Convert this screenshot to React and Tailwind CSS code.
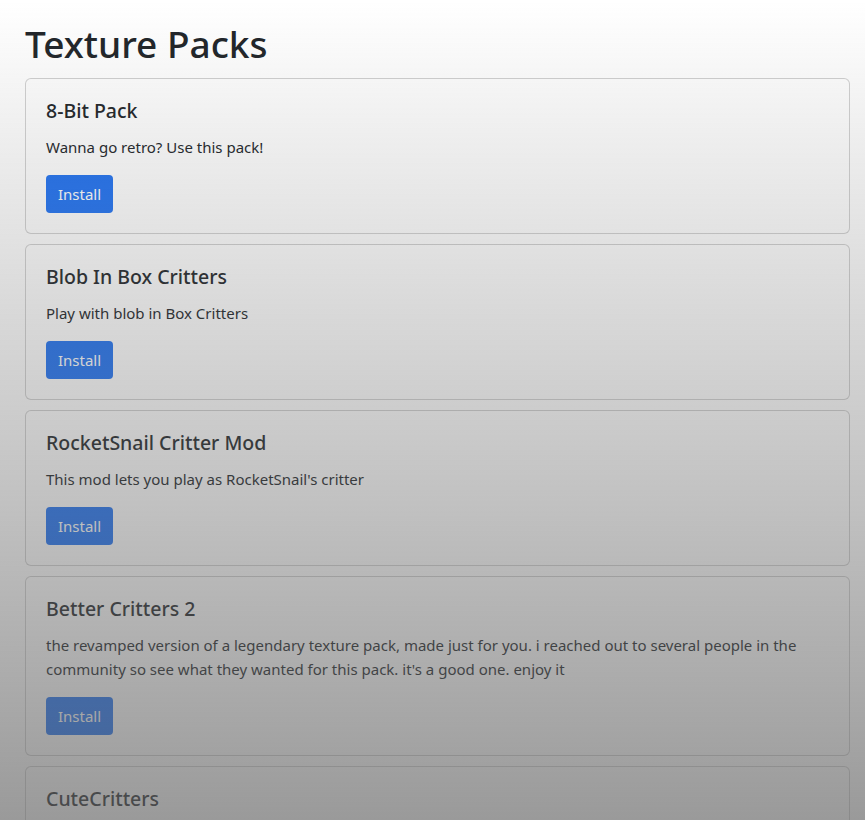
import React from "react";

const packs = [
  { title: "8-Bit Pack", text: "Wanna go retro? Use this pack!" },
  { title: "Blob In Box Critters", text: "Play with blob in Box Critters" },
  { title: "RocketSnail Critter Mod", text: "This mod lets you play as RocketSnail's critter" },
  {
    title: "Better Critters 2",
    text: "the revamped version of a legendary texture pack, made just for you. i reached out to several people in the community so see what they wanted for this pack. it's a good one. enjoy it",
  },
  { title: "CuteCritters", text: "", partial: true },
];

function PackCard({ pack }) {
  return (
    <div className="border border-[rgba(0,0,0,0.175)] rounded-[6px] bg-white p-5 mb-[10px] min-h-[80px]">
      <h5 className="text-[19.5px] leading-6 font-medium mb-3">{pack.title}</h5>
      {pack.text && <p className="text-[15px] leading-6 mb-4">{pack.text}</p>}
      {!pack.partial && (
        <button className="bg-[#2273f2] text-white text-[15px] leading-6 px-3 py-[7px] rounded-[4px] h-[38px]">
          Install
        </button>
      )}
    </div>
  );
}

export default function App() {
  return (
    <div className="relative h-[820px] overflow-hidden bg-white text-[#212529] font-['Noto_Sans',sans-serif] pl-[25px] pr-[15px] pt-[20px]">
      <h1 className="text-[37px] leading-[48px] font-medium mb-[10px]">Texture Packs</h1>
      {packs.map((p) => (
        <PackCard key={p.title} pack={p} />
      ))}
      <div className="fixed inset-0 pointer-events-none bg-linear-to-b from-[rgba(97,97,97,0)] to-[rgba(97,97,97,0.64)]" />
    </div>
  );
}
